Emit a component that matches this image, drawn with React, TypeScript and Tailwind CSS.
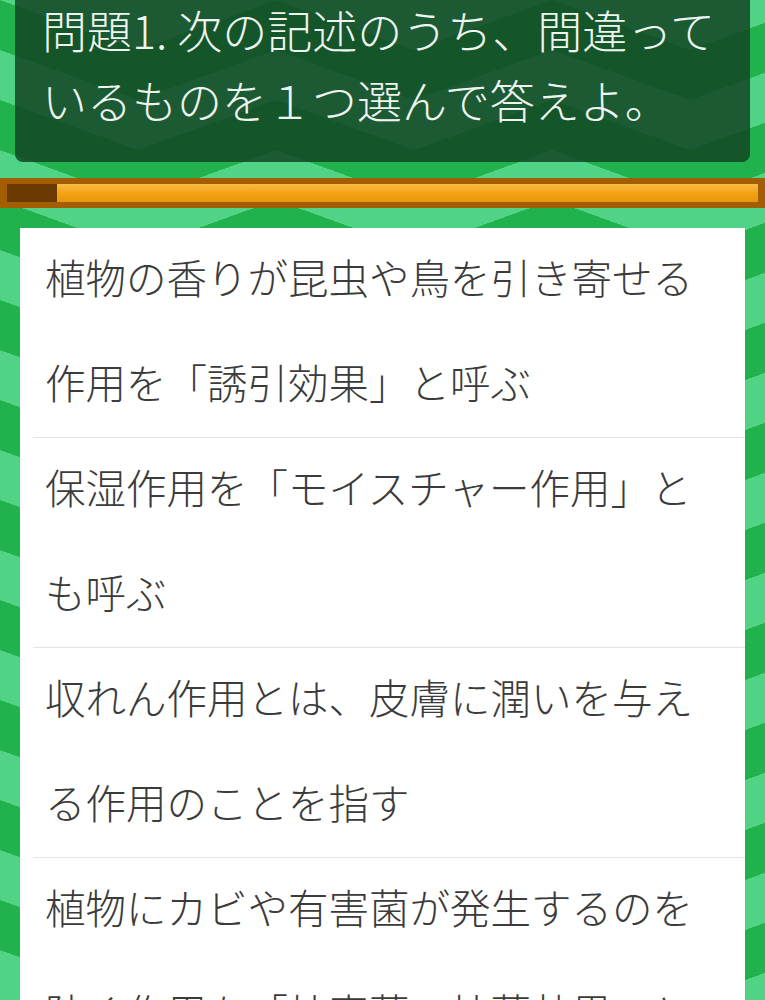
import React from 'react';

// zigzag stripes behind everything (light bands over a darker green)
const pattern =
  'bg-[#22b24d] ' +
  'bg-[image:linear-gradient(to_bottom_right,#50d385_25%,transparent_25%),linear-gradient(to_bottom_left,#50d385_25%,transparent_25%),linear-gradient(to_top_left,#50d385_25%,transparent_25%),linear-gradient(to_top_right,#50d385_25%,transparent_25%)] ' +
  'bg-[length:276px_100px] bg-[position:-138px_0,-138px_0,0_0,0_0]';

const choices = [
  '植物の香りが昆虫や鳥を引き寄せる作用を「誘引効果」と呼ぶ',
  '保湿作用を「モイスチャー作用」とも呼ぶ',
  '収れん作用とは、皮膚に潤いを与える作用のことを指す',
  '植物にカビや有害菌が発生するのを防ぐ作用を「抗真菌・抗菌効果」と呼ぶ',
];

const App: React.FC = () => {
  return (
    <div
      className={`w-[765px] h-[1000px] overflow-hidden font-light ${pattern}`}
      style={{ fontFamily: '"Noto Sans CJK JP", "Noto Sans", sans-serif' }}
    >
      {/* Question panel */}
      <div className="mx-[15px] rounded-b-[8px] bg-[#124424]/85 pl-[27px] pr-[8px] pb-[27px]">
        <p className="-mt-[5px] text-[45px] leading-[70px] text-[#eef4ef]">
          問題1. 次の記述のうち、間違っているものを１つ選んで答えよ。
        </p>
      </div>

      {/* Timer bar */}
      <div className="mt-[16px] flex h-[30px] bg-[#a35d03] px-[7px] py-[6px]">
        <div className="w-[50px] bg-[#6b3a02]" />
        <div className="flex-1 bg-gradient-to-b from-[#f9bb42] via-[#f2a312] to-[#e8960a]" />
      </div>

      {/* Choices */}
      <div className="mt-[20px] ml-[20px] w-[725px] flow-root bg-white">
        {choices.map((c, i) => (
          <div key={i}>
            {i > 0 && <div className="ml-[13px] h-px bg-[#e4e4e4]" />}
            <p className="-mt-[3px] mb-[3px] pl-[25px] pr-[48px] text-[40.5px] leading-[104.5px] text-[#3b3b3b]">{c}</p>
          </div>
        ))}
      </div>
    </div>
  );
};

export default App;
